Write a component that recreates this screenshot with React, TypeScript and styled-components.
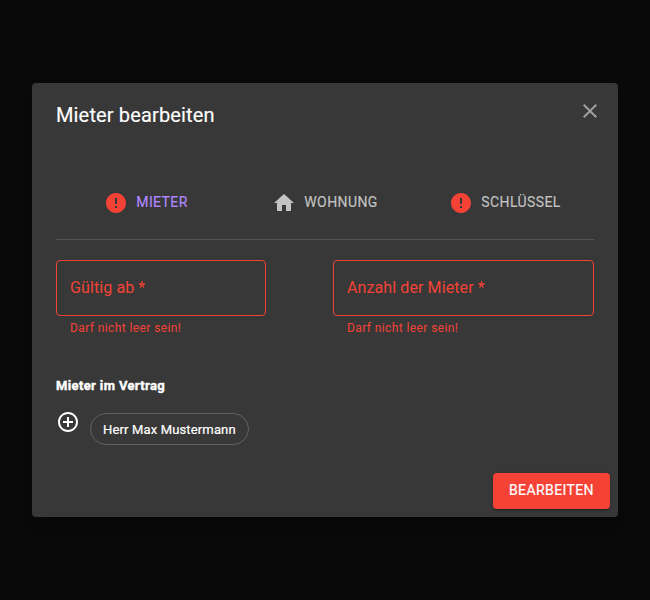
import React from 'react';
import styled, { createGlobalStyle } from 'styled-components';

const Global = createGlobalStyle`
  *, *::before, *::after { box-sizing: border-box; }
  html, body { margin: 0; padding: 0; background: #090909; }
  body { font-family: Roboto, "Liberation Sans", sans-serif; color: #fff; }
`;

const Backdrop = styled.div`
  height: 600px;
  display: flex;
  align-items: center;
  justify-content: center;
  overflow: hidden;
`;

const Dialog = styled.section`
  width: 586px;
  height: 434px;
  display: flex;
  flex-direction: column;
  background: #383838;
  border-radius: 4px;
  box-shadow: 0 11px 15px -7px rgba(0, 0, 0, 0.2);
`;

const Header = styled.header`
  height: 64px;
  padding: 16px 16px 0 24px;
  display: flex;
  justify-content: space-between;
`;

const Title = styled.h2`
  margin: 0;
  font-size: 20px;
  line-height: 32px;
  font-weight: 400;
  letter-spacing: 0.15px;
  -webkit-text-stroke: 0.15px currentColor;
`;

const Icon = styled.svg`
  width: 24px;
  height: 24px;
  flex: none;
  fill: currentColor;
`;

const CloseButton = styled.button`
  width: 24px;
  height: 24px;
  padding: 0;
  border: 0;
  background: none;
  color: #9e9e9e;
`;

const Steps = styled.nav`
  height: 93px;
  margin: 0 24px;
  padding-top: 43px;
  display: grid;
  grid-template-columns: 180px 178px 182px;
  border-bottom: 1px solid #555;
`;

const Step = styled.div<{ $active?: boolean }>`
  display: flex;
  align-items: center;
  justify-content: center;
  height: 24px;
  gap: 8px;
  font-size: 14px;
  font-weight: 400;
  letter-spacing: 0.4px;
  text-transform: uppercase;
  -webkit-text-stroke: 0.15px currentColor;
  color: ${(p) => (p.$active ? '#b388ff' : '#c3c3c3')};
`;

const StepIcon = styled.span<{ $error?: boolean }>`
  display: flex;
  padding-top: 2px;
  color: ${(p) => (p.$error ? '#f44336' : '#c3c3c3')};
`;

const Fields = styled.div`
  display: flex;
  justify-content: space-between;
  padding: 20px 24px 0;
`;

const Field = styled.div<{ $width: number }>`
  width: ${(p) => p.$width}px;
  color: #f44336;
`;

const Input = styled.div`
  height: 56px;
  padding: 0 13px;
  border: 1px solid #f44336;
  border-radius: 4px;
  font-size: 16px;
  line-height: 54px;
  letter-spacing: 0.1px;
`;

const Helper = styled.div`
  padding: 2px 14px 0;
  font-size: 12px;
  line-height: 20px;
  letter-spacing: 0.4px;
`;

const SectionTitle = styled.h3`
  margin: 38px 24px 0;
  font-size: 13px;
  line-height: 20px;
  font-weight: 700;
  letter-spacing: 0.37px;
  -webkit-text-stroke: 0.4px currentColor;
`;

const Tenants = styled.div`
  display: flex;
  padding: 14px 24px 0;
  gap: 10px;
`;

const Chip = styled.span`
  height: 32px;
  margin-top: 3px;
  padding: 0 12px;
  border: 1px solid #616161;
  border-radius: 16px;
  font-size: 13px;
  line-height: 31px;
  letter-spacing: 0.15px;
  -webkit-text-stroke: 0.2px currentColor;
`;

const Actions = styled.footer`
  margin-top: auto;
  padding: 8px;
  display: flex;
  justify-content: flex-end;
`;

const Submit = styled.button`
  width: 117px;
  height: 36px;
  padding: 0 0 2px;
  border: 0;
  border-radius: 4px;
  background: #f44336;
  color: #fff;
  font: 400 14px/24px Roboto, sans-serif;
  letter-spacing: 0.4px;
  text-transform: uppercase;
  -webkit-text-stroke: 0.2px currentColor;
  box-shadow: 0 3px 1px -2px rgba(0, 0, 0, 0.2), 0 2px 2px rgba(0, 0, 0, 0.14),
    0 1px 5px rgba(0, 0, 0, 0.12);
`;

const icons = {
  close: 'M19 6.41 17.59 5 12 10.59 6.41 5 5 6.41 10.59 12 5 17.59 6.41 19 12 13.41 17.59 19 19 17.59 13.41 12z',
  error: 'M12 2C6.48 2 2 6.48 2 12s4.48 10 10 10 10-4.48 10-10S17.52 2 12 2zm1 15h-2v-2h2v2zm0-4h-2V7h2v6z',
  home: 'M10 20v-6h4v6h5v-8h3L12 3 2 12h3v8z',
  add: 'M13 7h-2v4H7v2h4v4h2v-4h4v-2h-4V7zm-1-5C6.48 2 2 6.48 2 12s4.48 10 10 10 10-4.48 10-10S17.52 2 12 2zm0 18c-4.41 0-8-3.59-8-8s3.59-8 8-8 8 3.59 8 8-3.59 8-8 8z',
};

const Glyph = ({ name }: { name: keyof typeof icons }) => (
  <Icon viewBox="0 0 24 24" aria-hidden="true"><path d={icons[name]} /></Icon>
);

const steps: { label: string; icon: keyof typeof icons; active?: boolean }[] = [
  { label: 'Mieter', icon: 'error', active: true },
  { label: 'Wohnung', icon: 'home' },
  { label: 'Schlüssel', icon: 'error' },
];

export default function App() {
  return (
    <>
      <Global />
      <Backdrop>
        <Dialog role="dialog">
          <Header>
            <Title>Mieter bearbeiten</Title>
            <CloseButton aria-label="Schließen"><Glyph name="close" /></CloseButton>
          </Header>
          <Steps>
            {steps.map((s) => (
              <Step key={s.label} $active={s.active}>
                <StepIcon $error={s.icon === 'error'}><Glyph name={s.icon} /></StepIcon>
                {s.label}
              </Step>
            ))}
          </Steps>
          <Fields>
            <Field $width={210}><Input>Gültig ab *</Input><Helper>Darf nicht leer sein!</Helper></Field>
            <Field $width={261}><Input>Anzahl der Mieter *</Input><Helper>Darf nicht leer sein!</Helper></Field>
          </Fields>
          <SectionTitle>Mieter im Vertrag</SectionTitle>
          <Tenants>
            <Glyph name="add" />
            <Chip>Herr Max Mustermann</Chip>
          </Tenants>
          <Actions><Submit>Bearbeiten</Submit></Actions>
        </Dialog>
      </Backdrop>
    </>
  );
}
